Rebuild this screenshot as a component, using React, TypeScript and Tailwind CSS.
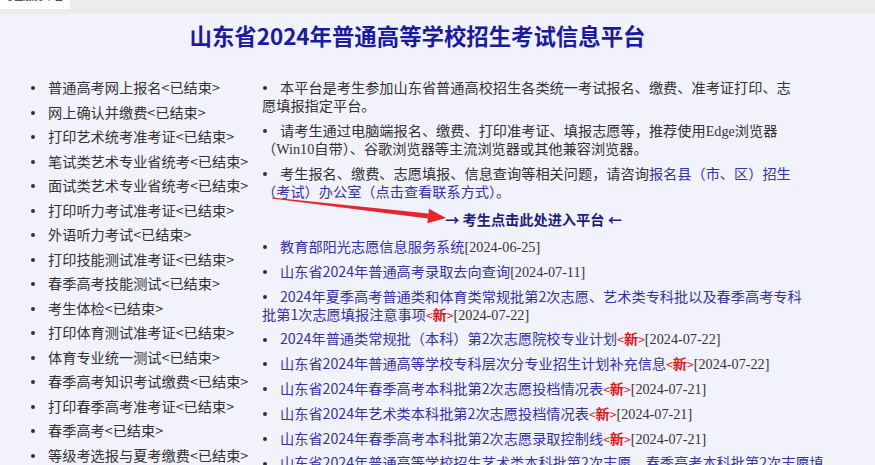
import React from "react";

const leftItems = [
  "普通高考网上报名",
  "网上确认并缴费",
  "打印艺术统考准考证",
  "笔试类艺术专业省统考",
  "面试类艺术专业省统考",
  "打印听力考试准考证",
  "外语听力考试",
  "打印技能测试准考证",
  "春季高考技能测试",
  "考生体检",
  "打印体育测试准考证",
  "体育专业统一测试",
  "春季高考知识考试缴费",
  "打印春季高考准考证",
  "春季高考",
  "等级考选报与夏考缴费",
];

type LinkItem = { lines: string[]; isNew: boolean; date: string };

const links: LinkItem[] = [
  { lines: ["教育部阳光志愿信息服务系统"], isNew: false, date: "2024-06-25" },
  { lines: ["山东省2024年普通高考录取去向查询"], isNew: false, date: "2024-07-11" },
  {
    lines: [
      "2024年夏季高考普通类和体育类常规批第2次志愿、艺术类专科批以及春季高考专科",
      "批第1次志愿填报注意事项",
    ],
    isNew: true,
    date: "2024-07-22",
  },
  { lines: ["2024年普通类常规批（本科）第2次志愿院校专业计划"], isNew: true, date: "2024-07-22" },
  { lines: ["山东省2024年普通高等学校专科层次分专业招生计划补充信息"], isNew: true, date: "2024-07-22" },
  { lines: ["山东省2024年春季高考本科批第2次志愿投档情况表"], isNew: true, date: "2024-07-21" },
  { lines: ["山东省2024年艺术类本科批第2次志愿投档情况表"], isNew: true, date: "2024-07-21" },
  { lines: ["山东省2024年春季高考本科批第2次志愿录取控制线"], isNew: true, date: "2024-07-21" },
  {
    lines: [
      "山东省2024年普通高等学校招生艺术类本科批第2次志愿、春季高考本科批第2次志愿填",
      "报注意事项",
    ],
    isNew: true,
    date: "2024-07-21",
  },
];

function Dot() {
  return (
    <span className="inline-block w-[4px] h-[4px] rounded-full bg-[#333] align-middle ml-[1px] mr-[13px] relative top-[-1px]"></span>
  );
}

function Serif({ children }: { children: React.ReactNode }) {
  return <span className="font-['Liberation_Serif',serif] leading-none">{children}</span>;
}

export default function App() {
  return (
    <div className="relative min-h-[465px] w-full overflow-hidden bg-[#f1f2fb] font-['Noto_Sans_CJK_SC','Noto_Sans',sans-serif] text-[14.2px] text-[#333]">
      <div className="h-[14px] bg-[#ececec]">
        <div className="w-[70px] h-[9px] bg-white overflow-hidden">
          <div className="text-[10px] leading-[10px] -mt-[9px] pl-[4px] text-[#333]">考生服务平台</div>
        </div>
      </div>

      <h1 className="mt-[5px] pr-[40px] text-center text-[22.4px] leading-[32px] font-bold text-[#1a1aa6]">
        山东省2024年普通高等学校招生考试信息平台
      </h1>

      <div className="mt-[27px] flex">
        <ul className="w-[262px] shrink-0 pl-[30px]">
          {leftItems.map((t) => (
            <li key={t} className="leading-[18px] mb-[6.5px] whitespace-nowrap">
              <Dot />
              {t}&lt;已结束&gt;
            </li>
          ))}
        </ul>

        <div className="w-[570px] shrink-0">
          <ul>
            <li className="leading-[18px] mb-[7px] whitespace-nowrap">
              <Dot />
              本平台是考生参加山东省普通高校招生各类统一考试报名、缴费、准考证打印、志
              <br />
              愿填报指定平台。
            </li>
            <li className="leading-[18px] mb-[7px] whitespace-nowrap">
              <Dot />
              请考生通过电脑端报名、缴费、打印准考证、填报志愿等，推荐使用<Serif>Edge</Serif>浏览器
              <br />（<Serif>Win10</Serif>自带）、谷歌浏览器等主流浏览器或其他兼容浏览器。
            </li>
            <li className="leading-[18px] whitespace-nowrap">
              <Dot />
              考生报名、缴费、志愿填报、信息查询等相关问题，请咨询
              <a className="text-[#3434a8]">
                报名县（市、区）招生
                <br />
                （考试）办公室（点击查看联系方式）
              </a>
              。
            </li>
          </ul>

          <div className="mt-[10px] w-[543px] leading-[18px] text-center font-bold text-[#1e1e80]">
            → 考生点击此处进入平台 ←
          </div>

          <ul className="mt-[9px]">
            {links.map((l) => (
              <li key={l.lines[0]} className="leading-[18px] mb-[6.8px] whitespace-nowrap">
                <Dot />
                <a className="text-[#3434a8]">
                  {l.lines.map((ln, i) => (
                    <React.Fragment key={i}>
                      {i > 0 && <br />}
                      {ln}
                    </React.Fragment>
                  ))}
                </a>
                {l.isNew && (
                  <span className="text-[#e01818] leading-none">
                    <span className="text-[12px] leading-none">&lt;</span>
                    <span className="font-bold">新</span>
                    <span className="text-[12px] leading-none">&gt;</span>
                  </span>
                )}
                <Serif>[{l.date}]</Serif>
              </li>
            ))}
          </ul>
        </div>
      </div>

      <svg
        className="pointer-events-none absolute left-0 top-0"
        width="875"
        height="465"
        viewBox="0 0 875 465"
      >
        <polygon points="272,197.4 428.3,213.4 427.7,218.6 271.9,198.6" fill="#e3262d" />
        <polygon points="429,208.8 446,218 427.3,223.2" fill="#e3262d" />
      </svg>
    </div>
  );
}
